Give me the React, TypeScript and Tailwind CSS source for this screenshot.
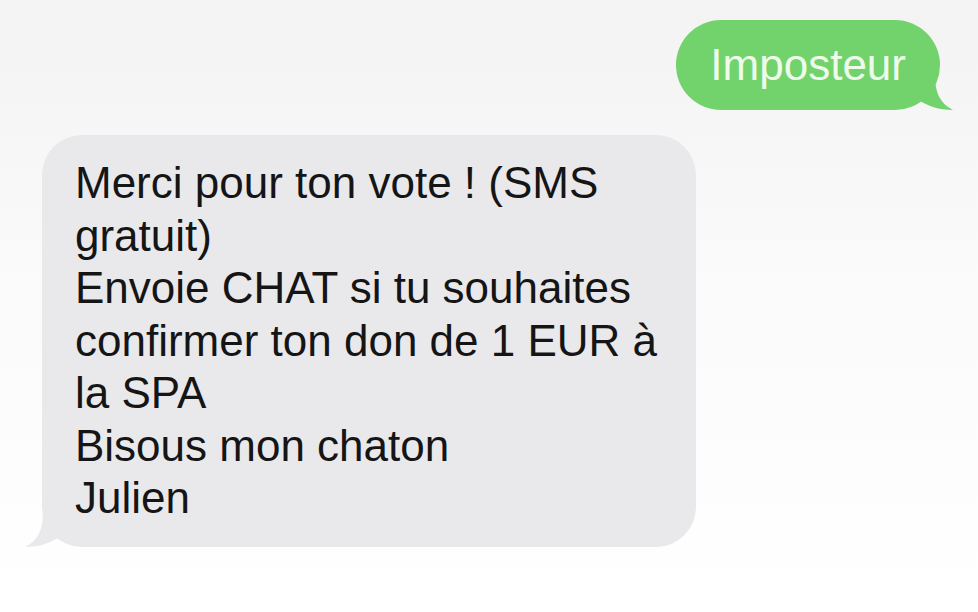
export default function App() {
  return (
    <div
      className="w-[978px] h-[612px] overflow-hidden bg-gradient-to-b from-[#f3f3f3] via-[#fbfbfb] to-white flex flex-col"
      style={{ fontFamily: '"Liberation Sans", Arial, sans-serif' }}
    >
      {/* Sent bubble */}
      <div className="self-end mr-[38px] mt-[20px] relative">
        <div className="relative z-10 bg-[#72d36c] rounded-[45px] px-[34px] py-[19px] text-[44px] leading-[52px] text-[#eefbea]">
          Imposteur
        </div>
        <svg
          className="absolute right-[-13px] bottom-0 z-0"
          width="40"
          height="34"
          viewBox="0 0 40 34"
        >
          <path d="M0 0 L22 0 C22 18 28 28 40 34 C26 34 14 30 6 24 Z" fill="#72d36c" />
        </svg>
      </div>

      {/* Received bubble */}
      <div className="ml-[42px] mt-[25px] relative w-[654px]">
        <div className="relative z-10 bg-[#e9e9eb] rounded-[40px] pl-[33px] pr-[20px] py-[22px] text-[44px] leading-[52.5px] text-[#151515]">
          Merci pour ton vote ! (SMS
          <br />
          gratuit)
          <br />
          Envoie CHAT si tu souhaites
          <br />
          confirmer ton don de 1 EUR à
          <br />
          la SPA
          <br />
          Bisous mon chaton
          <br />
          Julien
        </div>
        <svg
          className="absolute left-[-17px] bottom-0 z-0"
          width="40"
          height="34"
          viewBox="0 0 40 34"
        >
          <path d="M40 0 L18 0 C18 18 12 28 0 34 C14 34 26 30 34 24 Z" fill="#e9e9eb" />
        </svg>
      </div>
    </div>
  );
}
